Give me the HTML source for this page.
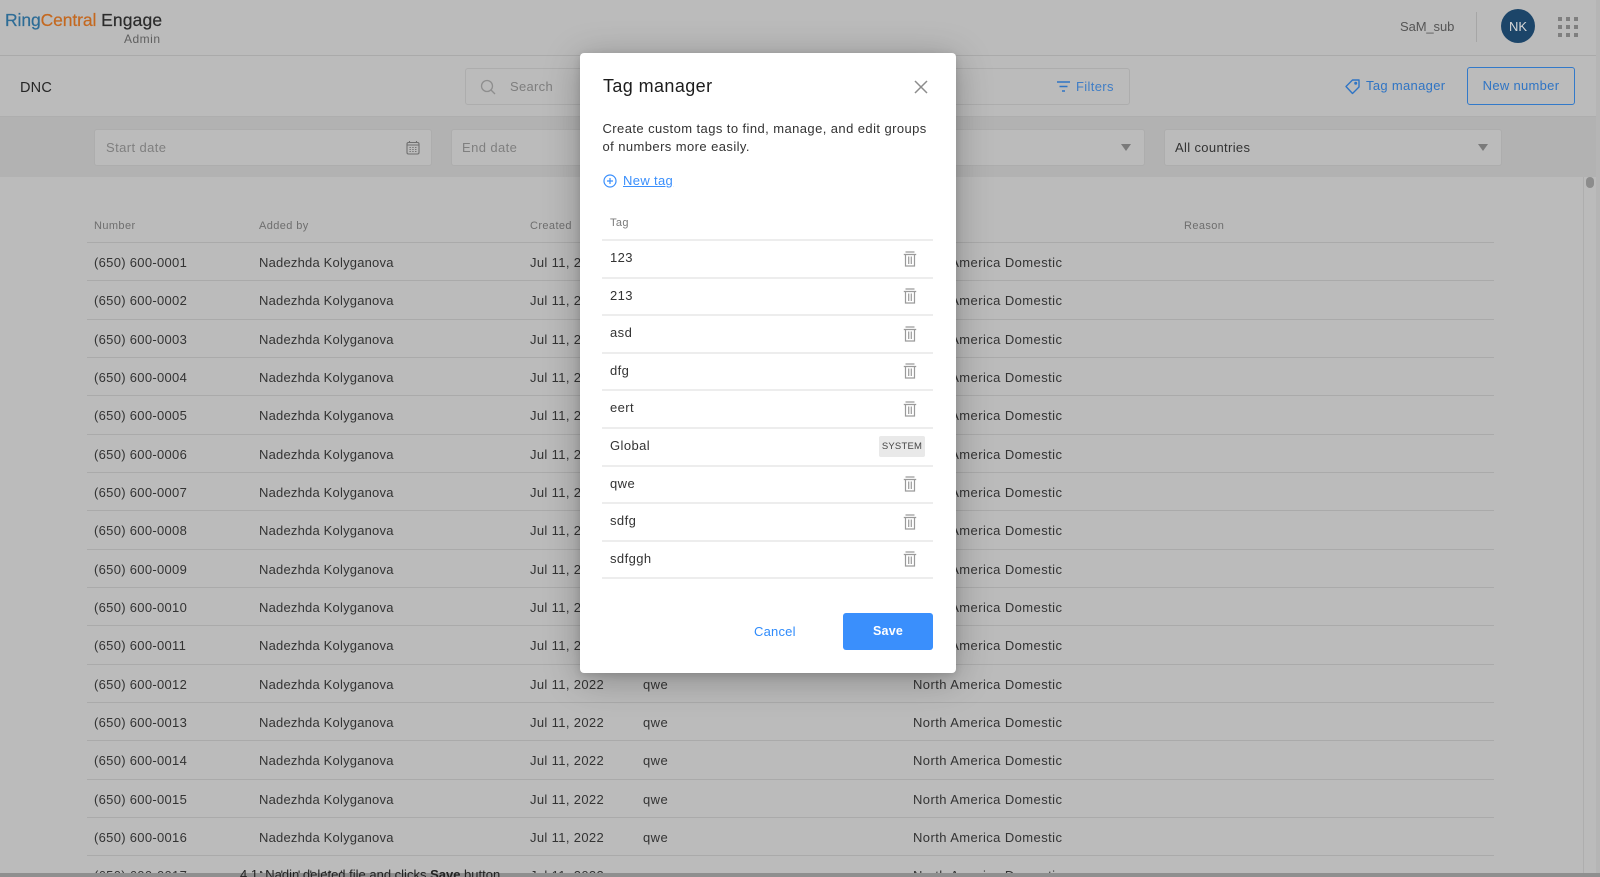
<!DOCTYPE html>
<html><head><meta charset="utf-8"><title>Tag manager</title>
<style>
*{box-sizing:border-box}
html,body{margin:0;width:1600px;height:877px;overflow:hidden;background:#bbb;font-family:"Liberation Sans",sans-serif;color:#333}
.a{position:absolute;white-space:nowrap}
#bg{position:absolute;left:0;top:0;width:1600px;height:877px;overflow:hidden;background:#bbb;filter:blur(.35px)}
.box{position:absolute;border:1px solid #adadad;border-radius:3px}
.r{position:absolute;left:87px;width:1407px;height:38.33px;border-bottom:1px solid #aaa;font-size:13px;letter-spacing:.42px;line-height:40px;color:#333}
.r span{position:absolute;top:0;white-space:nowrap}
.c1{left:7px;letter-spacing:.3px}.c2{left:172px;letter-spacing:.2px}.c3{left:443px;letter-spacing:.35px}.c4{left:556px}.c5{left:826px}
.h{position:absolute;top:220px;font-size:11px;letter-spacing:.4px;color:#6e6e6e}
#m{position:absolute;left:580px;top:53px;width:376px;height:620px;background:#fff;border-radius:4px;box-shadow:0 6px 36px rgba(0,0,0,.28),0 2px 8px rgba(0,0,0,.12)}
.t{position:absolute;left:22px;width:331px;height:37.6px;border-bottom:2px solid #ededed;font-size:13px;letter-spacing:.42px;line-height:34.5px;color:#333;padding-left:8px}
.t svg{position:absolute;left:301px;top:9.5px}
</style></head><body>
<div id="bg">
<div class="a" style="left:0;top:55px;width:1600px;height:1px;background:#aaa"></div>
<div class="a" style="left:5px;top:10px;font-size:17.5px;line-height:20px;letter-spacing:-.1px;color:#c4681f;-webkit-text-stroke:.2px"><span style="color:#2d6c96">Ring</span>Central <span style="color:#2b2b2b;letter-spacing:.15px">Engage</span></div>
<div class="a" style="left:124px;top:32px;font-size:12px;line-height:15px;letter-spacing:.5px;color:#5f5f5f">Admin</div>
<div class="a" style="left:1400px;top:18px;font-size:13px;line-height:17px;letter-spacing:-.1px;color:#555">SaM_sub</div>
<div class="a" style="left:1476px;top:12px;width:1px;height:30px;background:#a6a6a6"></div>
<div class="a" style="left:1501px;top:9px;width:34px;height:34px;border-radius:50%;background:#1c4569;color:#d8d8d8;font-size:13px;line-height:35px;text-align:center">NK</div>
<svg class="a" style="left:1558px;top:17px" width="20" height="20" fill="#7f7f7f"><rect width="4" height="4"/><rect x="8" width="4" height="4"/><rect x="16" width="4" height="4"/><rect y="8" width="4" height="4"/><rect x="8" y="8" width="4" height="4"/><rect x="16" y="8" width="4" height="4"/><rect y="16" width="4" height="4"/><rect x="8" y="16" width="4" height="4"/><rect x="16" y="16" width="4" height="4"/></svg>

<div class="a" style="left:20px;top:78.5px;font-size:14.5px;line-height:18px;letter-spacing:.2px;color:#262626">DNC</div>
<div class="box" style="left:465px;top:68px;width:665px;height:37px"></div>
<svg class="a" style="left:480px;top:79px" width="16" height="16" fill="none" stroke="#8e8e8e" stroke-width="1.3"><circle cx="7" cy="7" r="5.5"/><path d="M11 11l4 4"/></svg>
<div class="a" style="left:510px;top:78px;font-size:13px;line-height:17px;letter-spacing:.3px;color:#7e7e7e">Search</div>
<svg class="a" style="left:1056px;top:80px" width="16" height="13" fill="none" stroke="#2f74c4" stroke-width="1.6"><path d="M1 2h13M3.5 6.5h8M6 11h3"/></svg>
<div class="a" style="left:1076px;top:78px;font-size:13px;line-height:17px;letter-spacing:.35px;color:#3f7dc6">Filters</div>
<svg class="a" style="left:1344px;top:78px" width="17" height="17" fill="none" stroke="#2f74c4" stroke-width="1.4"><path d="M2 8.5 8.5 2H15V9l-6.5 6.5z" stroke-linejoin="round"/><circle cx="11.7" cy="5.3" r=".8"/></svg>
<div class="a" style="left:1366px;top:77px;font-size:13px;line-height:17px;letter-spacing:.32px;color:#2f74c4">Tag manager</div>
<div class="a" style="left:1467px;top:67px;width:108px;height:38px;border:1.5px solid #3279c9;border-radius:3px;text-align:center;font-size:13px;line-height:36px;letter-spacing:.3px;color:#2f74c4">New number</div>

<div class="a" style="left:0;top:116px;width:1600px;height:61px;background:#b2b2b2;border-top:1px solid #aeaeae"></div>
<div class="box" style="left:94px;top:129px;width:338px;height:37px;background:#bbb"></div>
<div class="a" style="left:106px;top:139px;font-size:13px;line-height:17px;letter-spacing:.4px;color:#7f7f7f">Start date</div>
<svg class="a" style="left:406px;top:140px" width="14" height="15" fill="none" stroke="#6f6f6f" stroke-width="1.1"><rect x="1" y="2.5" width="12" height="11.5" rx="1.5"/><path d="M3.5 1v2M10.5 1v2M1 5h12" /><path d="M3.5 7.5h7M3.5 9.5h7M3.5 11.5h7" stroke-dasharray="1.3 1.5"/></svg>
<div class="box" style="left:451px;top:129px;width:694px;height:37px;background:#bbb"></div>
<div class="a" style="left:462px;top:139px;font-size:13px;line-height:17px;letter-spacing:.4px;color:#7f7f7f">End date</div>
<svg class="a" style="left:1121px;top:144px" width="10" height="7" fill="#7a7a7a"><path d="M0 0h10L5 7z"/></svg>
<div class="box" style="left:1164px;top:129px;width:338px;height:37px;background:#bbb"></div>
<div class="a" style="left:1175px;top:139px;font-size:13px;line-height:17px;letter-spacing:.35px;color:#333">All countries</div>
<svg class="a" style="left:1478px;top:144px" width="10" height="7" fill="#7a7a7a"><path d="M0 0h10L5 7z"/></svg>

<div class="h" style="left:94px">Number</div>
<div class="h" style="left:259px">Added by</div>
<div class="h" style="left:530px">Created</div>
<div class="h" style="left:913px">Region</div>
<div class="h" style="left:1184px">Reason</div>
<div class="a" style="left:87px;top:242px;width:1407px;height:1px;background:#aaa"></div>

<div class="r" style="top:243px"><span class="c1">(650) 600-0001</span><span class="c2">Nadezhda Kolyganova</span><span class="c3">Jul 11, 2022</span><span class="c4">qwe</span><span class="c5">North America Domestic</span></div>
<div class="r" style="top:281.3px"><span class="c1">(650) 600-0002</span><span class="c2">Nadezhda Kolyganova</span><span class="c3">Jul 11, 2022</span><span class="c4">qwe</span><span class="c5">North America Domestic</span></div>
<div class="r" style="top:319.7px"><span class="c1">(650) 600-0003</span><span class="c2">Nadezhda Kolyganova</span><span class="c3">Jul 11, 2022</span><span class="c4">qwe</span><span class="c5">North America Domestic</span></div>
<div class="r" style="top:358px"><span class="c1">(650) 600-0004</span><span class="c2">Nadezhda Kolyganova</span><span class="c3">Jul 11, 2022</span><span class="c4">qwe</span><span class="c5">North America Domestic</span></div>
<div class="r" style="top:396.3px"><span class="c1">(650) 600-0005</span><span class="c2">Nadezhda Kolyganova</span><span class="c3">Jul 11, 2022</span><span class="c4">qwe</span><span class="c5">North America Domestic</span></div>
<div class="r" style="top:434.7px"><span class="c1">(650) 600-0006</span><span class="c2">Nadezhda Kolyganova</span><span class="c3">Jul 11, 2022</span><span class="c4">qwe</span><span class="c5">North America Domestic</span></div>
<div class="r" style="top:473px"><span class="c1">(650) 600-0007</span><span class="c2">Nadezhda Kolyganova</span><span class="c3">Jul 11, 2022</span><span class="c4">qwe</span><span class="c5">North America Domestic</span></div>
<div class="r" style="top:511.3px"><span class="c1">(650) 600-0008</span><span class="c2">Nadezhda Kolyganova</span><span class="c3">Jul 11, 2022</span><span class="c4">qwe</span><span class="c5">North America Domestic</span></div>
<div class="r" style="top:549.7px"><span class="c1">(650) 600-0009</span><span class="c2">Nadezhda Kolyganova</span><span class="c3">Jul 11, 2022</span><span class="c4">qwe</span><span class="c5">North America Domestic</span></div>
<div class="r" style="top:588px"><span class="c1">(650) 600-0010</span><span class="c2">Nadezhda Kolyganova</span><span class="c3">Jul 11, 2022</span><span class="c4">qwe</span><span class="c5">North America Domestic</span></div>
<div class="r" style="top:626.3px"><span class="c1">(650) 600-0011</span><span class="c2">Nadezhda Kolyganova</span><span class="c3">Jul 11, 2022</span><span class="c4">qwe</span><span class="c5">North America Domestic</span></div>
<div class="r" style="top:664.7px"><span class="c1">(650) 600-0012</span><span class="c2">Nadezhda Kolyganova</span><span class="c3">Jul 11, 2022</span><span class="c4">qwe</span><span class="c5">North America Domestic</span></div>
<div class="r" style="top:703px"><span class="c1">(650) 600-0013</span><span class="c2">Nadezhda Kolyganova</span><span class="c3">Jul 11, 2022</span><span class="c4">qwe</span><span class="c5">North America Domestic</span></div>
<div class="r" style="top:741.3px"><span class="c1">(650) 600-0014</span><span class="c2">Nadezhda Kolyganova</span><span class="c3">Jul 11, 2022</span><span class="c4">qwe</span><span class="c5">North America Domestic</span></div>
<div class="r" style="top:779.7px"><span class="c1">(650) 600-0015</span><span class="c2">Nadezhda Kolyganova</span><span class="c3">Jul 11, 2022</span><span class="c4">qwe</span><span class="c5">North America Domestic</span></div>
<div class="r" style="top:818px"><span class="c1">(650) 600-0016</span><span class="c2">Nadezhda Kolyganova</span><span class="c3">Jul 11, 2022</span><span class="c4">qwe</span><span class="c5">North America Domestic</span></div>
<div class="r" style="top:856.3px"><span class="c1">(650) 600-0017</span><span class="c2">Nadezhda Kolyganova</span><span class="c3">Jul 11, 2022</span><span class="c4">qwe</span><span class="c5">North America Domestic</span></div>

<div class="a" style="left:1583px;top:177px;width:1px;height:696px;background:#aeaeae"></div>
<div class="a" style="left:1586px;top:177px;width:8px;height:11px;border-radius:4px;background:#8c8c8c"></div>
<div class="a" style="left:1596px;top:0;width:4px;height:877px;background:#b5b5b5"></div>
<div class="a" style="left:0;top:873px;width:1600px;height:4px;background:#8f8f8f"></div>
<div class="a" style="left:240px;top:867px;height:10px;overflow:hidden;font-size:13px;line-height:12px;color:#222;background:none"><span style="position:relative;top:2px">4 1. Nadin deleted file and clicks <b>Save</b> button</span></div>
</div>

<div id="m">
<div class="a" style="left:23px;top:21px;font-size:18px;line-height:24px;letter-spacing:.4px;color:#1c1c1c">Tag manager</div>
<svg class="a" style="left:334px;top:27px" width="14" height="14" fill="none" stroke="#8c8c8c" stroke-width="1.5"><path d="M1 1l12 12M13 1 1 13"/></svg>
<div class="a" style="left:22.500px;top:67px;font-size:13px;line-height:18px;letter-spacing:.42px;color:#333">Create custom tags to find, manage, and edit groups<br>of numbers more easily.</div>
<svg class="a" style="left:23px;top:121px" width="14" height="14" fill="none" stroke="#3a8ffc" stroke-width="1.2"><circle cx="7" cy="7" r="6"/><path d="M7 4v6M4 7h6"/></svg>
<div class="a" style="left:43px;top:120px;font-size:13px;line-height:16px;letter-spacing:.35px;color:#3a8ffc;text-decoration:underline">New tag</div>
<div class="a" style="left:30px;top:162.500px;font-size:11px;line-height:15px;letter-spacing:.4px;color:#7a7a7a">Tag</div>
<div class="a" style="left:22px;top:186px;width:331px;height:2px;background:#ededed"></div>

<div class="t" style="top:188px">123<svg width="14" height="16" fill="none" stroke="#9a9a9a" stroke-width="1.2"><path d="M2.500 1h9M.8 3.500h12.400M2.500 3.500V15h9V3.500M5.700 5.500V13M8.300 5.500V13"/></svg></div>
<div class="t" style="top:225.600px">213<svg width="14" height="16" fill="none" stroke="#9a9a9a" stroke-width="1.2"><path d="M2.500 1h9M.8 3.500h12.400M2.500 3.500V15h9V3.500M5.700 5.500V13M8.300 5.500V13"/></svg></div>
<div class="t" style="top:263.200px">asd<svg width="14" height="16" fill="none" stroke="#9a9a9a" stroke-width="1.2"><path d="M2.500 1h9M.8 3.500h12.400M2.500 3.500V15h9V3.500M5.700 5.500V13M8.300 5.500V13"/></svg></div>
<div class="t" style="top:300.800px">dfg<svg width="14" height="16" fill="none" stroke="#9a9a9a" stroke-width="1.2"><path d="M2.500 1h9M.8 3.500h12.400M2.500 3.500V15h9V3.500M5.700 5.500V13M8.300 5.500V13"/></svg></div>
<div class="t" style="top:338.400px">eert<svg width="14" height="16" fill="none" stroke="#9a9a9a" stroke-width="1.2"><path d="M2.500 1h9M.8 3.500h12.400M2.500 3.500V15h9V3.500M5.700 5.500V13M8.300 5.500V13"/></svg></div>
<div class="t" style="top:376px">Global<div class="a" style="left:277px;top:7px;width:46px;height:21px;background:#e9e9e9;border-radius:2px;font-size:9.500px;line-height:21px;letter-spacing:.2px;text-align:center;color:#444;padding:0">SYSTEM</div></div>
<div class="t" style="top:413.600px">qwe<svg width="14" height="16" fill="none" stroke="#9a9a9a" stroke-width="1.2"><path d="M2.500 1h9M.8 3.500h12.400M2.500 3.500V15h9V3.500M5.700 5.500V13M8.300 5.500V13"/></svg></div>
<div class="t" style="top:451.200px">sdfg<svg width="14" height="16" fill="none" stroke="#9a9a9a" stroke-width="1.2"><path d="M2.500 1h9M.8 3.500h12.400M2.500 3.500V15h9V3.500M5.700 5.500V13M8.300 5.500V13"/></svg></div>
<div class="t" style="top:488.800px">sdfggh<svg width="14" height="16" fill="none" stroke="#9a9a9a" stroke-width="1.2"><path d="M2.500 1h9M.8 3.500h12.400M2.500 3.500V15h9V3.500M5.700 5.500V13M8.300 5.500V13"/></svg></div>

<div class="a" style="left:174px;top:570.500px;width:40px;text-align:center;font-size:13px;line-height:16px;letter-spacing:.2px;color:#2f8bfb">Cancel</div>
<div class="a" style="left:263px;top:560px;width:90px;height:37px;background:#3a8ffc;border-radius:3px;text-align:center;color:#fff;font-size:12.500px;font-weight:bold;line-height:37px;letter-spacing:.2px">Save</div>
</div>
</body></html>
